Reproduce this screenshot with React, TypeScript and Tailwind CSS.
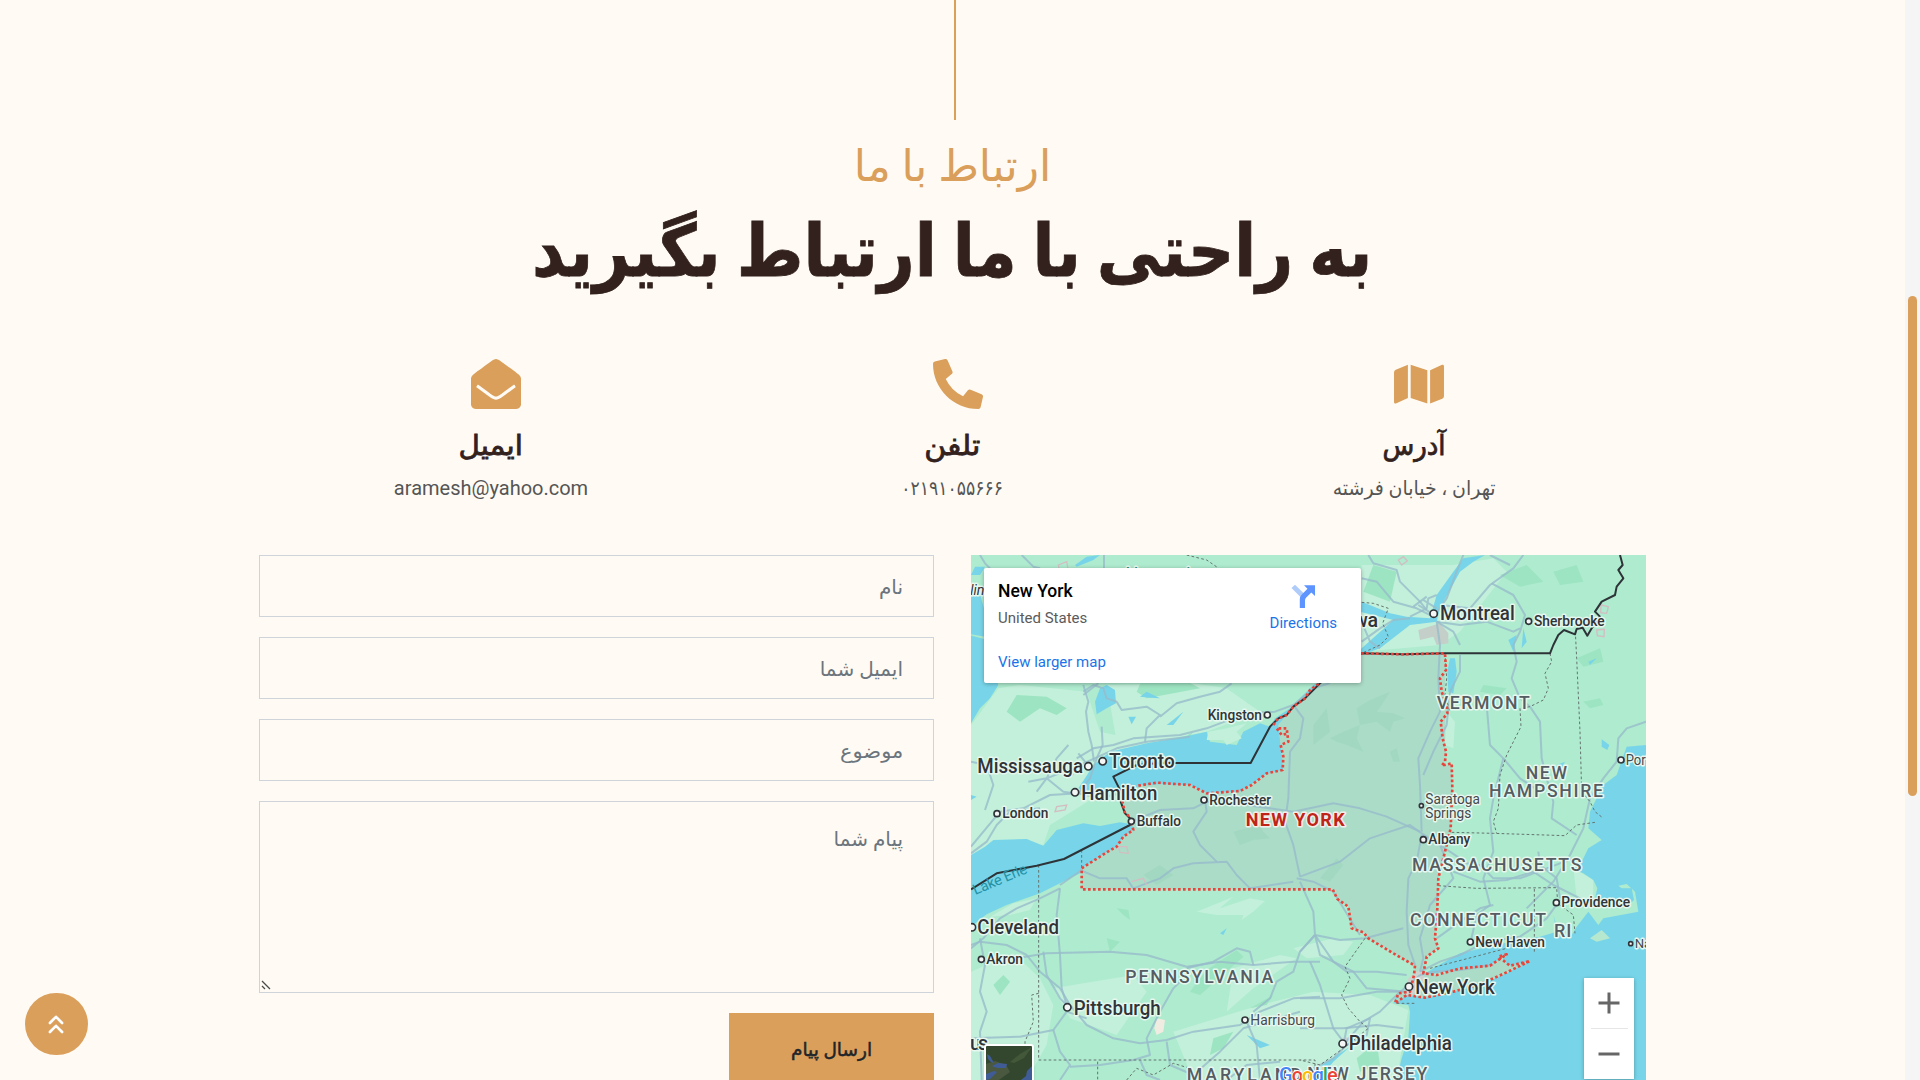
import React from "react";
import { FaEnvelopeOpen, FaMap, FaPhoneAlt } from "react-icons/fa";

const water = "#78d5e9";

const lightPatches = [
  "M33,540 115,430 180,420 380,440 420,560 560,590 330,760 250,795 33,900Z",
  "M440,420 700,415 800,430 900,500 740,560 560,595 470,590Z",
  "M33,950 120,890 250,900 270,840 400,760 360,740 200,790 33,850Z",
  "M1205,60 1480,60 1600,40 1640,80 1500,260 1440,300 1205,320Z",
  "M33,1280 160,1225 240,1300 280,1380 260,1500 200,1605 33,1605Z",
  "M640,1460 900,1380 1060,1340 1230,1350 1345,1395 1310,1605 700,1605Z",
  "M280,1330 520,1290 560,1340 470,1470 330,1420Z",
  "M1460,500 1485,530 1480,610 1455,600Z",
  "M1840,970 1900,1005 1900,1060 1850,1060Z",
  "M710,1100 820,1055 780,1090 870,1060 915,1068 880,1100 845,1125 850,1110 770,1110Z",
  "M90,1115 160,1075 230,1060 210,1095 150,1110Z",
  "M1000,1210 1120,1180 1180,1190 1150,1230 1040,1240Z",
  "M820,1270 960,1230 1010,1240 880,1330 800,1400Z",
];

const darkPatches = [
  "M140,500 170,450 260,455 320,490 290,510 240,490 180,530Z",
  "M33,270 100,290 110,370 72,380Z",
  "M570,350 720,430 560,460 530,440Z",
  "M650,590 700,560 640,640Z",
  "M1240,60 1310,80 1290,170 1210,140Z",
  "M1780,80 1850,60 1870,110 1800,120Z",
  "M1620,90 1700,60 1750,110 1680,125Z",
  "M1850,340 1920,310 1930,350 1870,365Z",
  "M1570,420 1640,430 1620,450 1560,440Z",
  "M1870,470 1920,460 1930,480 1890,490Z",
  "M470,1090 505,1095 510,1125 490,1110Z",
  "M740,1275 830,1215 850,1235 720,1350 690,1340Z",
  "M750,1530 760,1480 820,1460 790,1510Z",
  "M870,1390 940,1350 920,1380Z",
  "M100,1320 130,1290 150,1310 120,1350Z",
  "M1190,1540 1250,1490 1260,1560 1200,1580Z",
  "M440,1180 480,1190 450,1220Z",
];

const nyPatches = [
  "M1190,490 1230,465 1290,440 1265,480 1250,500 1300,505 1335,520 1300,530 1290,560 1250,530 1200,540Z",
  "M1110,580 1150,560 1200,540 1190,580 1210,620 1160,600 1130,590Z",
  "M1060,540 1100,490 1110,560 1060,600Z",
  "M1290,620 1310,610 1320,650 1300,650Z",
  "M820,860 860,850 900,840 910,860 930,880 880,885 840,900Z",
  "M550,990 600,960 640,990 590,1020Z",
  "M1080,1000 1130,940 1150,960 1110,1010Z",
];

const roads = [
  "M60,30 75,55 110,90 130,130",
  "M185,30 220,65 240,70",
  "M432,30 432,69",
  "M370,420 385,470 378,500 385,560 395,600 402,650",
  "M370,440 400,420 430,430 440,460 470,470 485,495 560,485 600,510 560,550 555,590",
  "M415,415 370,450",
  "M600,515 650,475 720,455 780,440 815,415",
  "M350,640 400,610 460,600 520,580 660,570 740,550 860,505 945,500 1000,480 1060,430 1110,414",
  "M360,660 470,610 560,590 690,575",
  "M425,545 428,600 410,640 390,700 355,745",
  "M205,710 260,700 310,740 340,745 M325,600 290,640 260,700 230,740 M260,700 350,665",
  "M355,625 375,650 395,655 M300,660 340,690",
  "M33,905 120,800 190,790 270,750 355,745",
  "M33,925 80,890 110,840 150,800 240,790",
  "M33,650 80,660 100,720 75,795",
  "M355,745 420,760 480,745",
  "M515,830 600,795 700,790 740,770 860,780 1000,800 1120,775 1200,790 1280,815 1380,860",
  "M735,765 740,800 700,860 720,900 770,950",
  "M360,975 420,1000 500,1000 520,1030 600,1000 640,970 700,955 800,950 830,990 870,1030 1000,1010",
  "M1000,480 1030,520 1020,580 990,620 985,760 975,830 1000,900 1020,995",
  "M1020,995 1140,950 1230,880 1290,860 1350,840 1385,865 1440,900 1500,940",
  "M1010,1000 1060,1010 1120,1040 1200,1170",
  "M1385,870 1370,950 1345,1000 1340,1100 1345,1200 1365,1260",
  "M1385,860 1380,720 1375,640 1410,560 1440,500 1435,400 1440,300 1430,230",
  "M1430,230 1500,240 1580,230 1660,260 1680,250",
  "M1205,100 1250,110 1300,170 1370,190 1420,215",
  "M1225,30 1240,55 1310,75 1320,110 1380,170 1400,195",
  "M1425,210 1460,160 1490,80 1510,30",
  "M1440,180 1530,190 1590,120 1660,70 1690,30",
  "M1590,30 1650,60 M1595,115 1660,150 1695,210 1680,260 1660,300 1670,350 1655,400 1680,460 1710,485",
  "M1350,215 1400,190 1405,160 1430,150 M1375,180 1415,205 M1390,165 1430,190 M1360,185 1400,155",
  "M1205,230 1230,290 1260,310 M1205,290 1260,250 1300,225 1350,220",
  "M1710,485 1740,530 1745,640 1760,700 1780,770 1775,820 1850,870",
  "M1580,480 1590,600 1630,640 1680,700 1740,740",
  "M1630,640 1600,760 1590,820 1600,920 1570,1000 1590,1080 1550,1110 1530,1200",
  "M1500,330 1500,380 1470,440 1460,540 1420,620 1390,690",
  "M1500,300 1480,260 1430,230",
  "M2058,530 2000,550 1975,580 1970,650 1930,700 1890,760 1870,850 1830,930 1780,1010 1700,1090",
  "M1480,950 1560,960 1600,1000 1680,1000 1760,970 1840,940",
  "M1480,980 1560,1010 1640,1005 1720,980 1780,1020 1860,1060",
  "M1735,920 1740,960 1790,1000 1800,1060",
  "M1380,1280 1440,1250 1500,1230 1580,1190 1680,1175 1760,1120 1800,1065",
  "M1430,1180 1500,1130 1560,1090 1600,1080",
  "M1380,1290 1420,1280 1500,1275 1600,1260",
  "M300,1030 290,1110 300,1230 305,1330 320,1380",
  "M170,1240 260,1225 450,1220 560,1230 680,1265 780,1250 880,1260 1000,1250 1080,1250",
  "M33,1200 60,1190 140,1200 200,1230 240,1280 300,1330 330,1380 380,1440 460,1480 540,1495 620,1485 700,1460 840,1440 900,1400 1000,1360 1080,1355",
  "M250,1220 260,1290 300,1360 320,1380",
  "M300,1030 240,1060 170,1090 120,1120 70,1180 33,1210",
  "M365,975 300,1020",
  "M60,1180 75,1260 60,1340 80,1400 60,1460 65,1605",
  "M33,1480 180,1475 280,1455 320,1400 380,1420",
  "M280,1455 300,1520 330,1560 300,1605",
  "M330,1565 420,1560 520,1545 570,1530 560,1480 600,1400 640,1330 680,1290",
  "M620,1490 630,1560 700,1590 780,1520 850,1450 1020,1400",
  "M860,1430 890,1500 900,1605",
  "M680,1270 760,1250 830,1210 870,1220 880,1260",
  "M880,1400 930,1360 950,1310 1000,1280 1020,1220 1065,1170",
  "M1065,1170 1060,1100 1020,1010 M1065,1170 1020,1220 M1065,1170 1140,1185 1215,1180 1330,1150",
  "M1065,1170 1120,1250 1160,1280 1250,1280 1340,1290",
  "M1065,1170 1080,1230 1180,1280 1220,1330 1340,1340",
  "M1020,1360 1140,1360 1250,1340 1340,1340",
  "M1050,1250 1080,1320 1120,1450 1150,1490",
  "M1020,1450 1150,1450 1250,1440 1330,1450",
  "M1150,1500 1210,1430 1260,1400 1310,1350 1380,1290",
  "M1150,1500 1160,1450 1230,1420 1220,1470 1160,1500 1120,1540 1060,1570",
  "M1380,1280 1390,1240 1380,1180 1410,1080 1480,1000 1440,900 1385,870",
  "M540,1545 560,1590 600,1605 M800,1605 860,1560 960,1550",
];

const dashed = [
  "M365,915V970",
  "M236,960V1545H1065V1575",
  "M413,1550V1605",
  "M236,1345 215,1350 220,1430 195,1490V1545",
  "M500,1605 530,1570 580,1590 640,1555 690,1570",
  "M680,30 740,45 775,69",
  "M1205,172 1240,175 1285,190 1268,235 1285,275 1260,300 1205,325",
  "M1770,325 1775,350 1755,385 1765,430 1750,465 1710,485 1680,490 1683,545 1640,630 1620,690 1615,790 1600,830 1610,865",
  "M1846,260 1850,340 1860,560 1865,740 1890,770 1905,800 1930,820",
  "M1475,862 1600,865 1815,872 1850,840 1905,832",
  "M1435,1022 1550,1030 1790,1028 1793,1075 1840,1110 1845,1165",
  "M1723,1032V1220",
  "M1410,1270 1640,1210",
  "M1215,1180 1155,1265 1170,1300 1145,1350 1165,1390 1200,1430 1225,1450 1150,1510 1080,1560 1020,1545",
  "M1310,1375 1370,1375",
  "M1455,325 1460,400 1455,450 1470,500",
];

const outline =
  "M1203,325 1330,328 1455,325 1458,375 1440,400 1445,440 1460,480 1462,505 1442,530 1448,580 1458,620 1455,650 1445,662 1475,655 1477,730 1472,850 1455,920 1435,1000 1432,1090 1425,1180 1435,1210 1400,1235 1390,1285 1430,1290 1500,1270 1590,1262 1640,1228 1615,1235 1650,1262 1710,1248 1640,1282 1560,1318 1480,1340 1395,1358 1340,1350 1305,1375 1315,1345 1350,1340 1362,1290 1365,1262 1300,1225 1225,1180 1210,1162 1175,1150 1165,1085 1132,1062 1118,1033 H365 V970 L440,922 470,905 490,875 520,855 510,815 495,805 485,760 Z";
const shore =
  "M535,722 590,713 690,720 740,745 840,738 875,720 920,685 968,675 970,635 962,600 985,590 980,550 950,550 965,570 985,565 M940,540 955,520 980,510 1000,485 1035,460 1050,435 1085,410 1203,325";

type Label = [string, number, number, number, number, string?];
// text, x, baseline, width, font size, kind
const labels: Label[] = [
  ["Mississauga", 52, 684, 317, 61],
  ["Toronto", 447, 669, 197, 61],
  ["Hamilton", 364, 764, 228, 61],
  ["Montreal", 1440, 226, 224, 61],
  ["Cleveland", 52, 1168, 245, 60],
  ["Pittsburgh", 341, 1409, 261, 61],
  ["Philadelphia", 1166, 1516, 310, 61],
  ["New York", 1366, 1346, 238, 61],
  ["Kingston", 743, 525, 163, 43],
  ["Rochester", 748, 780, 185, 43],
  ["Buffalo", 530, 844, 133, 43],
  ["London", 127, 818, 138, 43],
  ["Akron", 79, 1258, 110, 43],
  ["Albany", 1405, 898, 126, 43],
  ["Sherbrooke", 1722, 243, 212, 43],
  ["Providence", 1804, 1087, 206, 43],
  ["New Haven", 1546, 1205, 209, 43],
  ["Harrisburg", 871, 1440, 194, 43, "light"],
  ["Saratoga", 1396, 777, 164, 43, "light"],
  ["Springs", 1396, 818, 138, 43, "light"],
  ["Portland", 1997, 660, 148, 43, "light"],
  ["Nantucket", 2024, 1210, 180, 41, "light"],
  ["VERMONT", 1430, 493, 279, 53, "state"],
  ["NEW", 1697, 703, 124, 53, "state"],
  ["HAMPSHIRE", 1587, 756, 342, 53, "state"],
  ["MASSACHUSETTS", 1356, 977, 508, 53, "state"],
  ["CONNECTICUT", 1350, 1143, 408, 53, "state"],
  ["RI", 1782, 1176, 52, 54, "state"],
  ["PENNSYLVANIA", 496, 1315, 444, 53, "state"],
  ["MARYLAND", 680, 1607, 345, 53, "state"],
  ["NEW JERSEY", 1042, 1605, 360, 53, "state"],
  ["NEW YORK", 857, 843, 297, 54, "red"],
];

const dots: [number, number, number][] = [
  [385, 664, 12], [428, 649, 12], [345, 742, 12], [1421, 206, 12], [36, 1147, 12], [322, 1387, 12], [1148, 1496, 12], [1347, 1325, 12],
  [922, 510, 10], [732, 765, 10], [514, 829, 10], [111, 806, 10], [64, 1243, 10], [1390, 884, 10], [1706, 229, 10], [1789, 1073, 10], [1531, 1191, 10],
  [855, 1425, 10], [1384, 782, 7], [1983, 645, 10], [2012, 1196, 7],
];

const labelClass: Record<string, string> = {
  city: "fill-[#303438] font-medium stroke-[#e6f8ef]",
  light: "fill-[#45494d] stroke-[#e6f8ef]",
  state: "fill-[#555c62] font-medium stroke-[#e6f8ef]",
  red: "fill-[#bf2418] font-bold stroke-[#f3eeea]",
};

function Terrain() {
  return (
    <svg viewBox="33 30 2025 1575" className="block h-[525px] w-[675px] font-[Roboto]">
      <rect x="33" y="30" width="2025" height="1575" fill="#aeebcf" />
      {lightPatches.map((d) => <path key={d} d={d} fill="#c2f0da" />)}
      {darkPatches.map((d) => <path key={d} d={d} fill="#9de4c2" />)}
      <g fill={water}>
        <path d="M33,155 60,148 75,200 75,275 33,268Z M33,272 72,282 90,340 115,420 90,460 60,490 33,535Z M33,90 60,90 75,65 45,65Z M345,60 380,35 420,30 400,45 350,65Z" />
        <path d="M405,470 420,430 440,420 465,435 468,475 440,490 410,508Z M505,515 528,515 515,538Z M540,455 560,440 600,460 570,458Z M620,540 670,500 640,540Z" />
        <path d="M355,730 375,700 400,660 450,620 560,595 650,580 740,560 750,590 830,600 850,560 900,535 930,545 945,520 990,490 1060,420 1130,380 1205,310 1300,225 1200,200 1205,170 1290,205 1340,215 1410,220 1430,150 1480,80 1510,40 1575,30 1540,50 1500,80 1440,190 1430,230 1350,240 1260,310 1205,330 1090,420 1030,480 975,530 970,600 975,675 920,690 870,728 840,742 740,748 690,722 600,718 540,724 480,740 400,748Z" />
        <path d="M33,930 75,905 100,885 200,882 250,902 290,855 370,835 420,843 480,832 515,838 525,850 520,862 470,908 440,925 360,985 300,1015 240,1045 140,1080 80,1108 33,1145Z" />
        <path d="M2058,600 2000,605 1970,690 1930,720 1910,760 1890,800 1885,850 1925,885 1885,910 1865,950 1835,970 1870,985 1900,1005 1912,1030 1905,1060 1940,1085 2000,1085 2022,1065 2015,1030 1985,1030 1975,1022 2000,1017 2025,1040 2035,1100 1930,1120 1915,1140 1885,1100 1850,1145 1835,1170 1800,1175 1780,1110 1790,1160 1740,1175 1650,1190 1500,1225 1420,1270 1390,1290 1385,1300 1370,1350 1310,1350 1300,1375 1345,1380 1350,1400 1345,1480 1325,1540 1310,1605 H2058Z" />
        <path d="M1470,340 1485,340 1490,380 1480,445 1465,440 1462,380Z M1405,690 1440,630 1425,670 1405,700Z M1645,285 1670,270 1660,320Z M1690,250 1700,290 1685,310Z M1925,583 1948,600 1942,615 1925,605Z M1885,350 1910,340 1890,360Z M1790,660 1815,650 1805,670Z M820,850 830,800 815,890Z M850,840 855,920 845,900Z M415,980 445,1005 430,1010Z M860,1470 930,1500 900,1510Z M1085,1560 1170,1505 1120,1550 1080,1600Z M33,750 50,755 33,765Z M1020,750 1050,750 1045,765 1020,760Z M1305,780 1325,755 1315,785Z M1165,1040 1220,1010 1180,1045Z M780,1165 800,1150 790,1170Z" />
      </g>
      <path d="M745,560 800,550 860,535 830,560 845,580 800,600 790,585 740,585Z" fill="#c2f0da" />
      <path d="M1378,1305 1400,1290 1500,1272 1590,1262 1640,1230 1600,1275 1650,1275 1710,1248 1640,1284 1560,1320 1480,1340 1380,1358Z M1890,1180 1925,1155 1950,1180 1910,1190Z" fill="#b5e8cf" />
      <path d={`${outline} M485,760 540,720 690,720 740,745 840,740 920,687 970,675 962,600 955,540 1000,485 1085,410 1203,325 Z`} fill="#abdcc8" />
      <path d="M485,760 540,720 690,720 740,745 840,740 920,687 970,675 962,600 955,540 1000,485 1085,410 1203,325 1455,325 1455,650 1100,1000Z" fill="#abdcc8" />
      {nyPatches.map((d) => <path key={d} d={d} fill="#a2d8c1" />)}
      <path d="M1375,255 1440,235 1465,265 1465,295 1430,300 1420,275 1380,285Z" fill="#c3cfc8" />
      <path d="M1345,1300 1385,1270 1395,1300 1360,1350 1335,1350Z M1145,1480 1175,1475 1160,1495Z" fill="#cfd3cf" />
      <path d="M590,1420 615,1425 610,1460 590,1470 583,1450Z" fill="#f0ece1" />
      <g fill="none" stroke="#97bccb" strokeWidth="6" strokeLinejoin="round" strokeOpacity=".8">
        {roads.map((d) => <path key={d} d={d} />)}
      </g>
      <g fill="none" stroke="#d3bdc3" strokeWidth="4">
        <path d="M295,60 320,50 325,75 300,85Z M290,785 320,780 315,795 285,800Z M1315,45 1330,35 1342,48 1325,60Z M1923,180 1945,185 1940,205 1922,203Z M1910,255 1933,253 1932,275 1912,272Z M475,905 500,905 505,925 480,922Z M515,1010 550,1000 560,1020" />
      </g>
      <g fill="none" stroke="#64746f" strokeWidth="3" strokeDasharray="8 7">
        {dashed.map((d) => <path key={d} d={d} />)}
      </g>
      <g fill="none" stroke="#2d3337" strokeWidth="6" strokeLinejoin="round">
        <path d="M33,1033 110,985 230,962 312,942 510,840 515,825 495,805 482,770 485,745 460,695 530,660 600,654H872L930,545 955,520 980,510 1000,485 1035,460 1085,410 1203,325 1330,328 1455,325H1770L1780,300 1795,270 1812,255 1845,268 1850,252 1868,248 1882,272 1895,250 1920,215 1905,200 1925,170 1965,150 1970,125 1990,100 1975,75 1988,60 1980,30" />
      </g>
      <g fill="none" stroke="#e8453c" strokeWidth="8" strokeDasharray="8 7" strokeLinejoin="round">
        <path d={outline.replace(" Z", "")} />
        <path d={shore} />
      </g>
      <text transform="translate(46 1050) rotate(-23)" textLength="172" className="fill-[#2492a6] font-[Roboto] text-[44px]">Lake Erie</text>
      <g className="fill-[#f4f6f5] stroke-[#303438]" strokeWidth="5">
        {dots.map(([x, y, r]) => <circle key={`${x}-${y}`} cx={x} cy={y} r={r - 1} />)}
      </g>
      {labels.map(([text, x, y, width, size, kind = "city"]) => (
        <text key={text + y} x={x} y={y} textLength={width} lengthAdjust={kind === "state" || kind === "red" ? "spacing" : "spacingAndGlyphs"} fontSize={size} strokeWidth="9" strokeLinejoin="round" paintOrder="stroke" className={labelClass[kind]}>
          {text}
        </text>
      ))}
      <g fontSize="59" strokeWidth="9" strokeLinejoin="round" paintOrder="stroke" className={labelClass.city}>
        <text x="1180" y="246" textLength="74">wa</text>
        <text x="30" y="1516" textLength="54">us</text>
        <text x="490" y="98" fontSize="42" textLength="228" className="fill-[#2f8b6b]">Algonquin</text>
        <text x="31" y="151" fontSize="43" fontStyle="italic" fontWeight="400" textLength="42">lin</text>
      </g>
      <text x="957" y="1612" fontSize="60" fontWeight="500" stroke="#ffffff" strokeWidth="6" paintOrder="stroke" textLength="176">
        <tspan fill="#4285f4">G</tspan><tspan fill="#ea4335">o</tspan><tspan fill="#fbbc05">o</tspan><tspan fill="#4285f4">g</tspan><tspan fill="#34a853">l</tspan><tspan fill="#ea4335">e</tspan>
      </text>
    </svg>
  );
}

function MapPanel() {
  return (
    <div dir="ltr" className="relative h-[525px] w-[675px] overflow-hidden font-[Roboto]">
      <Terrain />
      <div className="absolute left-[13px] top-[13px] flex h-[115px] w-[377px] justify-between rounded-[2px] bg-white pl-[14px] pr-[24px] shadow-[0_1px_4px_rgba(0,0,0,0.3)]">
        <div className="flex flex-col">
          <div className="mt-[12px] text-[17.5px] font-medium leading-[22px] text-black">New York</div>
          <div className="mt-[7px] text-[15px] leading-[19px] text-[#5b5b5b]">United States</div>
          <div className="mt-[25px] text-[15px] leading-[19px] text-[#1a73e8]">View larger map</div>
        </div>
        <div className="flex flex-col items-center">
          <svg viewBox="0 0 24 24" className="mt-[16px] h-6 w-6">
            <path d="M0.5,4 4,0.8 12,8.5 12,14.5 10,13.5Z" fill="#aecbfa" />
            <path d="M8.8,24V15.5Q8.8,12.5 11,10.3L16.5,4.8 13,1.2H24V12L20.3,8.4 15,13.7Q14,14.8 14,16.3V24Z" fill="#5e94ff" />
          </svg>
          <div className="mt-[6px] text-[15px] leading-[19px] text-[#1a73e8]">Directions</div>
        </div>
      </div>
      <div className="absolute left-[13px] top-[489px] h-[50px] w-[50px] overflow-hidden rounded-[3px] border-2 border-white bg-[#33472f] shadow">
        <svg viewBox="0 0 46 46" className="h-[46px] w-[46px]">
          <path d="M0 18L9 15 20 19 24 26 10 36 0 34Z" fill="#4a5840" />
          <path d="M1 8L4 10 8 17 5 16 2 13Z M6 20L12 17 21 18 20 22 12 22 8 21Z M46 20L41 25 40 30 35 34 46 40Z M0 28L8 25 11 26 4 33 0 34Z" fill="#3f5c97" />
          <path d="M24 16L34 8 46 1 38 12 28 17Z" fill="#435839" />
        </svg>
      </div>
      <div className="absolute left-[613px] top-[423px] flex h-[101px] w-[50px] flex-col items-center bg-white shadow-[0_1px_4px_rgba(0,0,0,0.3)]">
        <svg viewBox="0 0 50 50" className="h-[50px] w-[50px] stroke-[#666666]" strokeWidth="3"><path d="M14.5 25H35.5M25 14.5V35.5" /></svg>
        <div className="h-px w-[37px] bg-[#e6e6e6]" />
        <svg viewBox="0 0 50 50" className="h-[50px] w-[50px] stroke-[#666666]" strokeWidth="3"><path d="M14.5 25H35.5" /></svg>
      </div>
    </div>
  );
}

function Contact({ icon, title, children }: { icon: React.ReactNode; title: React.ReactNode; children: React.ReactNode }) {
  return (
    <div className="flex w-[461.5px] flex-col items-center">
      <div className="relative left-[5px] flex h-[50px] items-center text-[#da9f5b]">{icon}</div>
      <h3 className="mt-[17px] h-[40px] text-[28px] leading-[40px] text-[#33211d] [-webkit-text-stroke:0.8px_#33211d]">{title}</h3>
      <p className="mt-[2px] h-[40px] text-[20px] leading-[40px] text-[#555555]">{children}</p>
    </div>
  );
}

const fieldClass = "flex h-[62px] w-full shrink-0 items-center border border-[#ced4da] px-[30px] pt-[2px] text-[20px] text-[#6c757d]";

export default function App() {
  return (
    <div dir="rtl" className="relative h-[1080px] w-[1920px] overflow-hidden bg-[#fffbf4] font-['Roboto','DejaVu_Sans',sans-serif]">
      <main className="mr-[15px] flex w-[1905px] flex-col items-center">
        <div className="relative left-[2px] h-[120px] w-[2px] bg-[#da9f5b]" />
        <h2 className="mt-[16px] h-[60px] whitespace-nowrap text-[44px] leading-[60px] text-[#da9f5b]"><span className="inline-block">ارتباط با ما</span></h2>
        <h1 className="mt-[11px] h-[93px] whitespace-nowrap text-[72px] font-bold leading-[90px] text-[#33211d]"><span className="inline-block scale-x-[0.892] [-webkit-text-stroke:0.8px_#33211d]">به راحتی با ما ارتباط بگیرید</span></h1>
        <section className="mt-[59px] flex">
          <Contact icon={<FaMap className="h-[44.4px] w-[50px]" />} title={<span className="inline-block scale-x-[0.93]">آدرس</span>}><span className="inline-block scale-x-[0.945]">تهران ، خیابان فرشته</span></Contact>
          <Contact icon={<FaPhoneAlt className="h-[50px] w-[50px]" />} title={<span className="inline-block scale-x-[1.07]">تلفن</span>}><span className="inline-block scale-x-[0.86]">۰۲۱۹۱۰۵۵۶۶۶</span></Contact>
          <Contact icon={<FaEnvelopeOpen className="h-[50px] w-[50px]" />} title={<span className="inline-block scale-x-[1.05]">ایمیل</span>}>aramesh@yahoo.com</Contact>
        </section>
        <section className="mt-[47px] flex w-[1387px] justify-between">
          <MapPanel />
          <form className="flex h-[525px] w-[675px] flex-col gap-5 overflow-hidden">
            <div className={fieldClass}><span className="inline-block">نام</span></div>
            <div className={fieldClass}><span className="inline-block">ایمیل شما</span></div>
            <div className={fieldClass}><span className="inline-block origin-right scale-x-[1.05]">موضوع</span></div>
            <div className="relative h-[192px] w-full shrink-0 border border-[#ced4da] px-[30px] pt-[20px] text-[20px] leading-[34px] text-[#6c757d]">
              <span className="inline-block">پیام شما</span>
              <svg viewBox="0 0 10 10" className="absolute bottom-[2px] left-px h-[10px] w-[10px]" stroke="#4a4a4a" strokeWidth="1.3"><path d="M1 1L9 9M1 6L4 9" /></svg>
            </div>
            <button type="button" className="flex h-[75px] w-[205px] shrink-0 items-center justify-center bg-[#da9f5b] text-[18.5px] text-[#212529] [-webkit-text-stroke:0.5px_#212529]"><span className="inline-block">ارسال پیام</span></button>
          </form>
        </section>
      </main>
      <button type="button" className="absolute left-[25px] top-[993px] flex h-[62px] w-[63px] items-center justify-center rounded-full bg-[#da9f5b]">
        <svg viewBox="0 0 20 20" className="relative left-[-0.5px] h-5 w-5" fill="none" stroke="#ffffff" strokeWidth="2.6" strokeLinecap="round" strokeLinejoin="round"><path d="M3.9 9L10 2.8 16.1 9M3.9 18L10 11.8 16.1 18" /></svg>
      </button>
      <div className="absolute right-0 top-0 h-full w-[15px] bg-[#f5f5f5]">
        <div className="absolute left-[3px] top-[296px] h-[500px] w-[9px] rounded-full bg-[#da9f5b]" />
      </div>
    </div>
  );
}
